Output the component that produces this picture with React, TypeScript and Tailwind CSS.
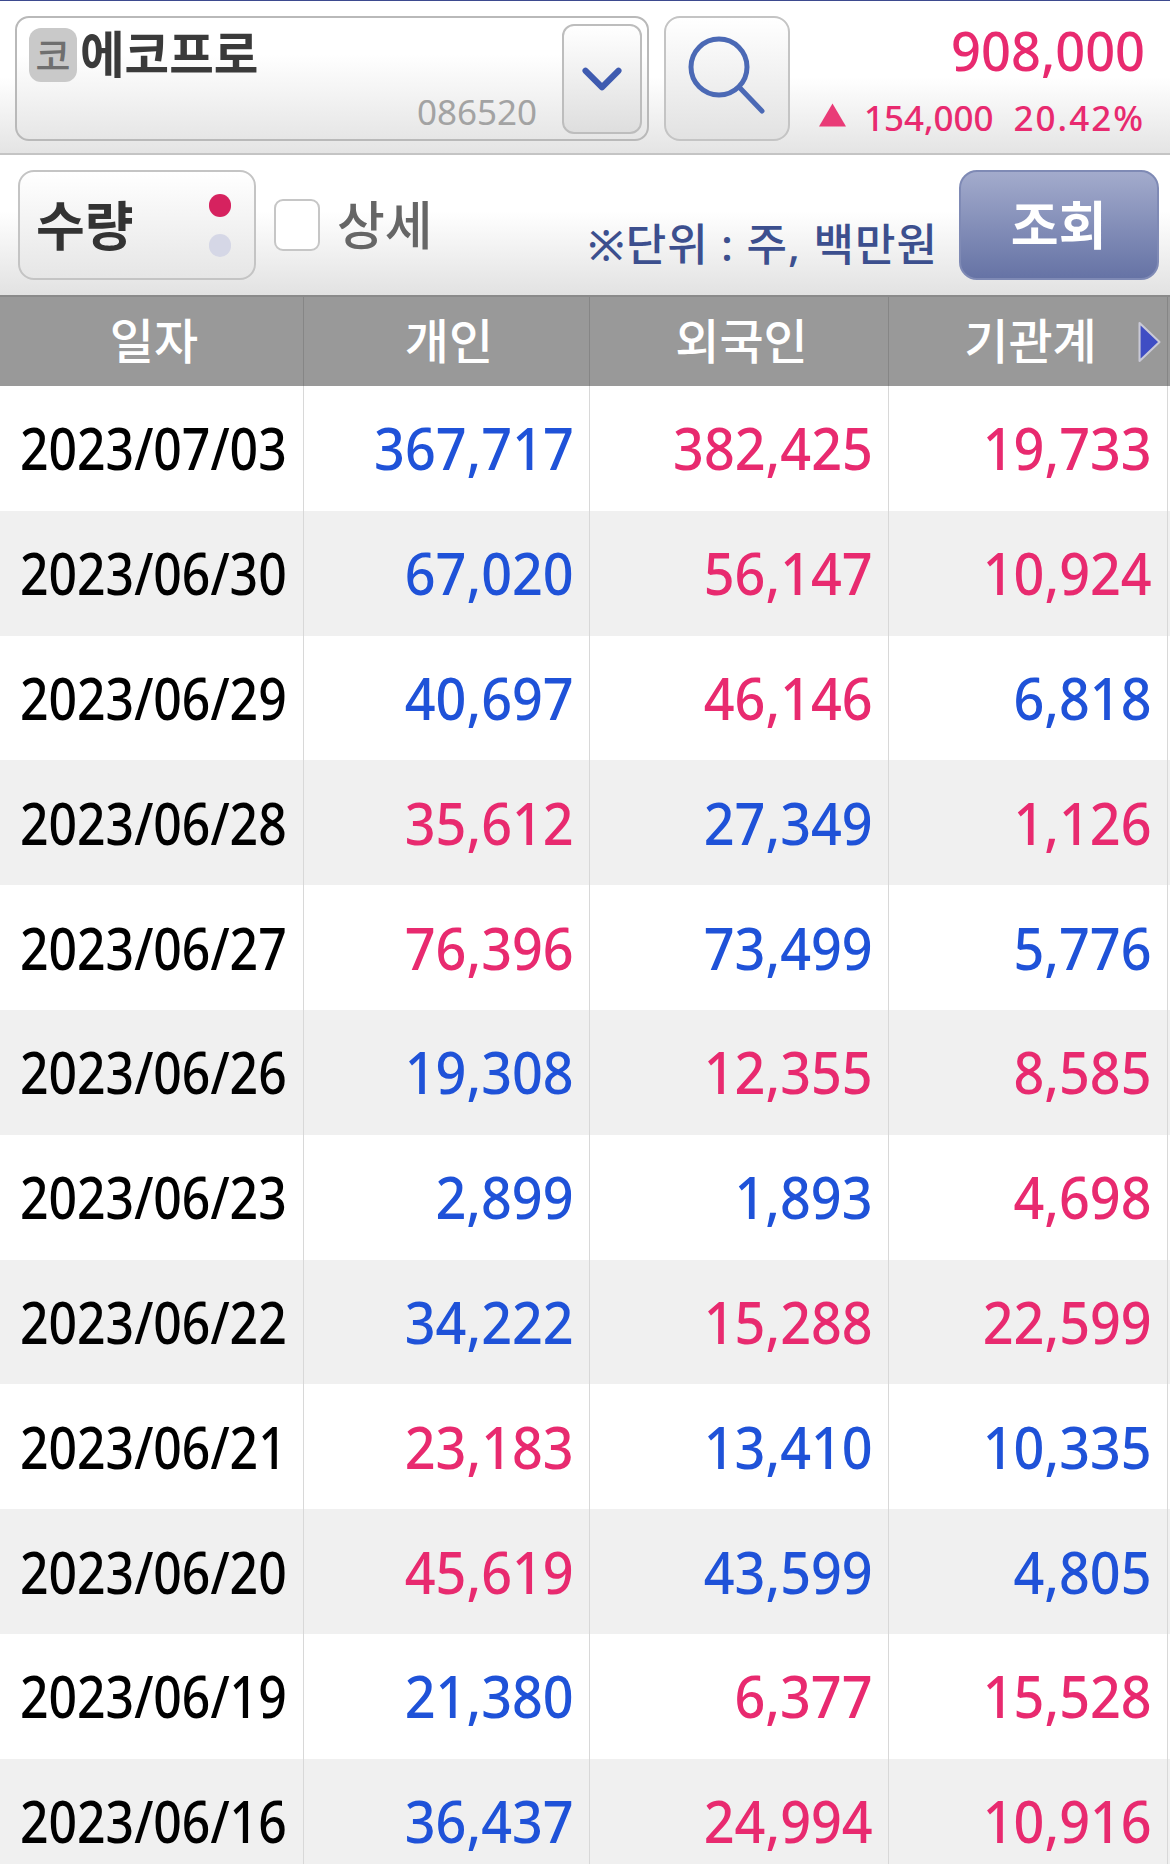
import { ChevronDown } from 'lucide-react';

type Tone = 'b' | 'r';
type Cell = [string, Tone];

interface Row {
  date: string;
  cells: Cell[];
}

const rows: Row[] = [
  { date: '2023/07/03', cells: [['367,717', 'b'], ['382,425', 'r'], ['19,733', 'r']] },
  { date: '2023/06/30', cells: [['67,020', 'b'], ['56,147', 'r'], ['10,924', 'r']] },
  { date: '2023/06/29', cells: [['40,697', 'b'], ['46,146', 'r'], ['6,818', 'b']] },
  { date: '2023/06/28', cells: [['35,612', 'r'], ['27,349', 'b'], ['1,126', 'r']] },
  { date: '2023/06/27', cells: [['76,396', 'r'], ['73,499', 'b'], ['5,776', 'b']] },
  { date: '2023/06/26', cells: [['19,308', 'b'], ['12,355', 'r'], ['8,585', 'r']] },
  { date: '2023/06/23', cells: [['2,899', 'b'], ['1,893', 'b'], ['4,698', 'r']] },
  { date: '2023/06/22', cells: [['34,222', 'b'], ['15,288', 'r'], ['22,599', 'r']] },
  { date: '2023/06/21', cells: [['23,183', 'r'], ['13,410', 'b'], ['10,335', 'b']] },
  { date: '2023/06/20', cells: [['45,619', 'r'], ['43,599', 'b'], ['4,805', 'b']] },
  { date: '2023/06/19', cells: [['21,380', 'b'], ['6,377', 'r'], ['15,528', 'r']] },
  { date: '2023/06/16', cells: [['36,437', 'b'], ['24,994', 'r'], ['10,916', 'r']] },
];

const gridCols = 'grid grid-cols-[304px_286px_299px_279px_2px]';
const cjk = "font-['Noto_Sans','Noto_Sans_CJK_KR',sans-serif]";

function HeaderCell({ label, arrow }: { label: string; arrow?: boolean }) {
  return (
    <div className="relative flex items-center justify-center border-r border-[#868686] pb-[2px] pl-[5px]">
      <span className="inline-block text-[48px] font-medium leading-none text-white">{label}</span>
      {arrow && (
        <svg viewBox="0 0 24 40" className="absolute right-[5px] top-[24px] h-[42px] w-[26px]">
          <path d="M3 2 L22 20 L3 38 Z" fill="#3f4dc4" stroke="#c9c9d6" strokeWidth="2" strokeLinejoin="round" />
        </svg>
      )}
    </div>
  );
}

export default function App() {
  return (
    <div className={`h-[1864px] w-[1170px] overflow-hidden bg-white ${cjk}`}>
      <div className="h-px bg-[#3d4a8f]" />

      {/* stock search bar */}
      <div className="flex h-[154px] items-start border-b-2 border-[#c4c4c4] bg-gradient-to-b from-white from-50% to-[#e4e4e4] pl-[15px] pt-[15px]">
        <div className="relative flex h-[125px] w-[634px] items-start rounded-[14px] border-2 border-[#b9b9b9] bg-gradient-to-b from-white from-30% to-[#e6e6e6] pl-[12px] pt-[10px]">
          <span className="flex h-[54px] w-[48px] items-center justify-center rounded-[12px] bg-[#c9c9c9] text-[38px] font-medium leading-none text-[#6f6f6f]">코</span>
          <span className="ml-[3px] -mt-[2px] inline-block origin-left scale-x-[0.97] text-[50px] font-bold leading-[56px] text-[#3a3a3a]">에코프로</span>
          <span className="absolute left-[400px] top-[76px] inline-block origin-left text-[35px] leading-none text-[#a3a3a3]">086520</span>
          <div className="absolute right-[5px] top-[6px] flex h-[110px] w-[80px] items-center justify-center rounded-[12px] border-2 border-[#bdbdbd] bg-gradient-to-b from-white to-[#dedede]">
            <ChevronDown size={66} strokeWidth={2.2} color="#3f5bb0" />
          </div>
        </div>

        <div className="ml-[15px] flex h-[125px] w-[126px] items-center justify-center rounded-[16px] border-2 border-[#c4c4c4] bg-gradient-to-b from-white to-[#e2e2e2]">
          <svg viewBox="0 0 90 90" className="h-[90px] w-[90px]">
            <circle cx="37" cy="33" r="28" fill="none" stroke="#4b69b5" strokeWidth="5" />
            <path d="M58 54 L80 77" stroke="#4b69b5" strokeWidth="5" strokeLinecap="round" />
          </svg>
        </div>

        <div className="flex flex-1 flex-col items-end pr-[25px] text-[#e82a6f]">
          <span className="mt-[3px] inline-block origin-right scale-x-[0.97] text-[54px] font-medium leading-[62px]">908,000</span>
          <div className="mt-[16px] flex items-center">
            <svg viewBox="0 0 26 22" className="-mt-[6px] mr-[18px] h-[24px] w-[27px]">
              <path d="M13 0 L26 22 L0 22 Z" fill="#e93b77" />
            </svg>
            <span className="inline-block text-[35px] font-medium leading-[42px]">154,000</span>
            <span className="ml-[20px] inline-block text-[35px] font-medium leading-[42px] tracking-[2px]">20.42%</span>
          </div>
        </div>
      </div>

      {/* query options */}
      <div className="flex h-[140px] items-start bg-gradient-to-b from-white from-40% to-[#e2e2e2] pl-[18px] pt-[15px]">
        <div className="flex h-[110px] w-[238px] items-center justify-between rounded-[16px] border-2 border-[#c4c4c4] bg-gradient-to-b from-white to-[#e6e6e6] pl-[16px] pr-[23px]">
          <span className="inline-block text-[53px] font-bold leading-none text-[#333]">수량</span>
          <div className="flex flex-col gap-[17px]">
            <span className="h-[23px] w-[22px] rounded-full bg-[#d6225f]" />
            <span className="h-[23px] w-[22px] rounded-full bg-[#d5d7e6]" />
          </div>
        </div>
        <span className="ml-[18px] mt-[29px] h-[52px] w-[46px] rounded-[9px] border-2 border-[#c6c6c6] bg-white" />
        <span className="ml-[17px] mt-[26px] inline-block text-[52px] font-medium leading-[58px] text-[#666]">상세</span>
        <span className="ml-[155px] mt-[46px] inline-block w-[346px] whitespace-nowrap text-[44px] font-medium leading-[56px] tracking-[1px] text-[#3c4f8e]">※단위 : 주, 백만원</span>
        <button className="ml-[25px] flex h-[110px] w-[200px] items-center justify-center rounded-[18px] border-2 border-[#7f8ab5] bg-gradient-to-b from-[#a3abcc] to-[#6673a5] text-[52px] font-bold leading-none text-white">
          조회
        </button>
      </div>

      {/* table head */}
      <div className={`${gridCols} h-[91px] border-t-2 border-[#8a8a8a] bg-[#999999]`}>
        <HeaderCell label="일자" />
        <HeaderCell label="개인" />
        <HeaderCell label="외국인" />
        <HeaderCell label="기관계" arrow />
      </div>

      {/* table body */}
      {rows.map((row, index) => (
        <div key={row.date} className={`${gridCols} h-[124.8px] ${index % 2 === 1 ? 'bg-[#f0f0f0]' : 'bg-white'}`}>
          <div className="flex items-center border-r border-[#d8d8d8] pl-[20px]">
            <span className="inline-block origin-left scale-x-[0.86] text-[58px] font-medium leading-none text-black">{row.date}</span>
          </div>
          {row.cells.map(([value, tone], i) => (
            <div key={i} className="flex items-center justify-end border-r border-[#d8d8d8] pr-[15px]">
              <span className={`inline-block origin-right scale-x-[0.93] text-[58px] font-medium leading-none ${tone === 'b' ? 'text-[#1f52d8]' : 'text-[#e82a6f]'}`}>
                {value}
              </span>
            </div>
          ))}
        </div>
      ))}
    </div>
  );
}
